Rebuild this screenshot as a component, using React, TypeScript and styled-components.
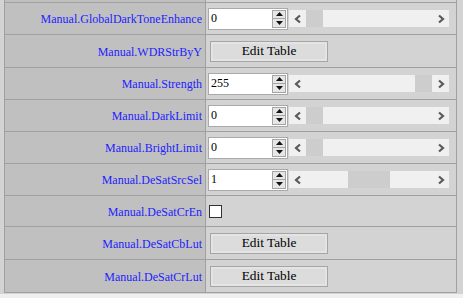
import styled, { createGlobalStyle } from 'styled-components';

type Param =
  | { kind: 'num'; name: string; value: number; max: number }
  | { kind: 'table'; name: string }
  | { kind: 'check'; name: string };

const PARAMS: Param[] = [
  { kind: 'num', name: 'Manual.GlobalDarkToneEnhance', value: 0, max: 255 },
  { kind: 'table', name: 'Manual.WDRStrByY' },
  { kind: 'num', name: 'Manual.Strength', value: 255, max: 255 },
  { kind: 'num', name: 'Manual.DarkLimit', value: 0, max: 255 },
  { kind: 'num', name: 'Manual.BrightLimit', value: 0, max: 255 },
  { kind: 'num', name: 'Manual.DeSatSrcSel', value: 1, max: 2 },
  { kind: 'check', name: 'Manual.DeSatCrEn' },
  { kind: 'table', name: 'Manual.DeSatCbLut' },
  { kind: 'table', name: 'Manual.DeSatCrLut' },
];

const ROW_HEIGHT = { num: 31, table: 32, check: 30 };
const TRACK = 126;
const SERIF = `"Liberation Serif", "Times New Roman", serif`;

const GlobalStyle = createGlobalStyle`
  html, body {
    margin: 0;
    padding: 0;
    background: #f0f0f0;
    font-family: ${SERIF};
  }
`;

function Chevron({ dir }: { dir: 'left' | 'right' }) {
  const pts = dir === 'left' ? '6,1.5 2,5 6,8.5' : '2,1.5 6,5 2,8.5';
  return (
    <svg width="8" height="10" viewBox="0 0 8 10">
      <polyline points={pts} fill="none" stroke="#5a5a5a" strokeWidth="2.2" />
    </svg>
  );
}

function Triangle({ up }: { up: boolean }) {
  return (
    <svg width="7" height="4" viewBox="0 0 7 4">
      <polygon points={up ? '0,4 7,4 3.5,0' : '0,0 7,0 3.5,4'} fill="#111" />
    </svg>
  );
}

function NumberField({ value, max }: { value: number; max: number }) {
  // small ranges get a proportional thumb, like a real scrollbar
  const thumb = max < 10 ? TRACK / (max + 1) : 17;
  const offset = ((TRACK - thumb) * value) / max;
  return (
    <>
      <Styled.NumberBox>
        <Styled.NumberText>{value}</Styled.NumberText>
        <Styled.Spinner>
          <Styled.SpinButton><Triangle up /></Styled.SpinButton>
          <Styled.SpinButton><Triangle up={false} /></Styled.SpinButton>
        </Styled.Spinner>
      </Styled.NumberBox>
      <Styled.Slider>
        <Styled.ArrowButton><Chevron dir="left" /></Styled.ArrowButton>
        <Styled.Track>
          <Styled.Thumb style={{ marginLeft: offset, width: thumb }} />
        </Styled.Track>
        <Styled.ArrowButton><Chevron dir="right" /></Styled.ArrowButton>
      </Styled.Slider>
    </>
  );
}

export default function App() {
  return (
    <Styled.Page>
      <GlobalStyle />
      <Styled.Panel>
        <Styled.Row $height={2}>
          <Styled.Label />
          <Styled.Value />
        </Styled.Row>
        {PARAMS.map((p) => (
          <Styled.Row key={p.name} $height={ROW_HEIGHT[p.kind]}>
            <Styled.Label>{p.name}</Styled.Label>
            <Styled.Value>
              {p.kind === 'num' && <NumberField value={p.value} max={p.max} />}
              {p.kind === 'table' && <Styled.EditButton>Edit Table</Styled.EditButton>}
              {p.kind === 'check' && <Styled.CheckBox />}
            </Styled.Value>
          </Styled.Row>
        ))}
      </Styled.Panel>
    </Styled.Page>
  );
}

const Styled = {
  Page: styled.div`
    width: 463px;
    height: 298px;
    overflow: hidden;
    background: #f0f0f0;
  `,
  Panel: styled.div`
    background: #d3d3d3;
    padding: 0 6px 1px 4px;
    width: 463px;
    box-sizing: border-box;
  `,
  Row: styled.div<{ $height: number }>`
    display: grid;
    grid-template-columns: 201px 1fr;
    height: ${({ $height }) => $height}px;
    border-left: 1px solid #a0a0a0;
    border-right: 1px solid #a0a0a0;
    border-bottom: 1px solid #a0a0a0;
  `,
  Label: styled.div`
    background: #c0c0c0;
    border-right: 1px solid #a0a0a0;
    display: flex;
    align-items: center;
    justify-content: flex-end;
    padding: 2px 3px 0 0;
    font-family: ${SERIF};
    font-size: 12px;
    color: #2222ff;
    white-space: nowrap;
  `,
  Value: styled.div`
    background: #d3d3d3;
    display: flex;
    align-items: center;
    padding-left: 2px;
    gap: 1px;
  `,
  NumberBox: styled.div`
    width: 80px;
    height: 22px;
    box-sizing: border-box;
    border: 1px solid #a9a9a9;
    background: #fff;
    display: flex;
    align-items: center;
    justify-content: space-between;
    padding: 0 1px 0 2px;
  `,
  NumberText: styled.span`
    font-family: ${SERIF};
    font-size: 12px;
    color: #000;
    align-self: flex-start;
    margin-top: 2px;
  `,
  Spinner: styled.div`
    display: flex;
    flex-direction: column;
    width: 14px;
    height: 18px;
  `,
  SpinButton: styled.div`
    flex: 1;
    display: flex;
    align-items: center;
    justify-content: center;
    background: #e6e6e6;
    border: 1px solid #a5a5a5;
    & + & {
      border-top: none;
    }
  `,
  Slider: styled.div`
    display: flex;
    width: 160px;
    height: 17px;
    background: #f0f0f0;
  `,
  ArrowButton: styled.div`
    width: 17px;
    display: flex;
    align-items: center;
    justify-content: center;
  `,
  Track: styled.div`
    flex: 1;
    display: flex;
  `,
  Thumb: styled.div`
    height: 17px;
    background: #cdcdcd;
  `,
  EditButton: styled.button`
    margin-left: 2px;
    width: 118px;
    height: 21px;
    padding: 0;
    background: #dcdcdc;
    border: 1px solid #a6a6a6;
    box-shadow: inset 0 0 0 2px #e4e4e4;
    font-family: ${SERIF};
    font-size: 13.333px;
    color: #000;
  `,
  CheckBox: styled.div`
    margin-left: 1px;
    width: 13px;
    height: 13px;
    box-sizing: border-box;
    border: 1px solid #333;
    background: #fff;
  `,
};
